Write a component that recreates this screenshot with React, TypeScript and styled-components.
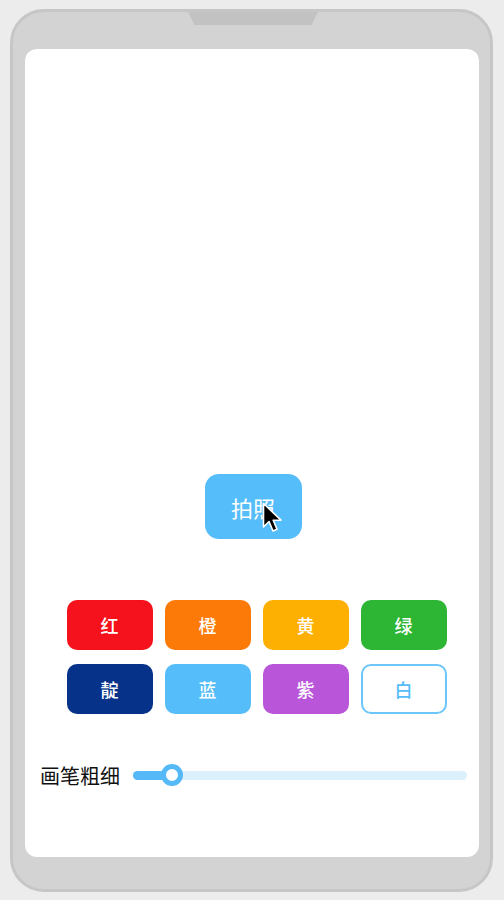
import styled, { createGlobalStyle } from 'styled-components';

const GlobalStyle = createGlobalStyle`
  html, body {
    margin: 0;
    padding: 0;
    background: #ececec;
    font-family: "Noto Sans CJK SC", "Noto Sans", sans-serif;
  }
`;

const colors: { label: string; bg: string; outline?: boolean }[] = [
  { label: '红', bg: '#f5121c' },
  { label: '橙', bg: '#fb7a08' },
  { label: '黄', bg: '#fdaf02' },
  { label: '绿', bg: '#2db534' },
  { label: '靛', bg: '#063289' },
  { label: '蓝', bg: '#55bdf9' },
  { label: '紫', bg: '#b855d9' },
  { label: '白', bg: '#ffffff', outline: true },
];

const App = (): JSX.Element => {
  const width = 11.7;
  return (
    <Page>
      <GlobalStyle />
      <Phone>
        <Notch />
        <Screen>
          <Spacer />
          <ShootButton>
            拍照
            <Cursor width="22" height="32" viewBox="0 0 22 32">
              <path
                d="M1.5 1.5 L1.5 25 L7 19.5 L11 29 L15 27.3 L11.2 18.2 L19 18.2 Z"
                fill="#000"
                stroke="#fff"
                strokeWidth="1.6"
                strokeLinejoin="round"
              />
            </Cursor>
          </ShootButton>
          <ColorGrid>
            {colors.map((c) => (
              <ColorButton key={c.label} $bg={c.bg} $outline={c.outline}>
                {c.label}
              </ColorButton>
            ))}
          </ColorGrid>
          <SliderRow>
            <SliderLabel>画笔粗细</SliderLabel>
            <Track>
              <Fill style={{ width: `${width}%` }} />
              <Thumb style={{ left: `${width}%` }} />
            </Track>
          </SliderRow>
        </Screen>
      </Phone>
    </Page>
  );
};

export default App;

const Page = styled.div`
  width: 504px;
  height: 900px;
  padding: 9px 11px 8px 10px;
  box-sizing: border-box;
`;

const Phone = styled.div`
  position: relative;
  height: 100%;
  box-sizing: border-box;
  background: #d3d3d3;
  border: 3px solid #c6c6c6;
  border-radius: 34px;
  padding: 37px 11px 32px 12px;
  display: flex;
`;

const Notch = styled.div`
  position: absolute;
  top: 0;
  left: 175px;
  width: 130px;
  height: 13px;
  background: #c2c2c2;
  clip-path: polygon(0 0, 100% 0, 95% 100%, 5% 100%);
`;

const Screen = styled.div`
  flex: 1;
  background: #ffffff;
  border-radius: 12px;
  display: flex;
  flex-direction: column;
  align-items: center;
  padding: 0 12px 70px 15px;
`;

const Spacer = styled.div`
  flex: 1;
`;

const ShootButton = styled.div`
  position: relative;
  width: 97px;
  height: 65px;
  border-radius: 14px;
  background: #55bdf9;
  color: #ffffff;
  font-size: 22px;
  display: flex;
  align-items: center;
  justify-content: center;
  margin-left: -1px;
`;

const Cursor = styled.svg`
  position: absolute;
  left: 57px;
  top: 28px;
`;

const ColorGrid = styled.div`
  margin-top: 61px;
  display: grid;
  grid-template-columns: repeat(4, 86px);
  column-gap: 12px;
  row-gap: 14px;
  margin-left: 6px;
`;

const ColorButton = styled.div<{ $bg: string; $outline?: boolean }>`
  height: 50px;
  box-sizing: border-box;
  border-radius: 10px;
  background: ${(p) => p.$bg};
  border: ${(p) => (p.$outline ? '2px solid #6cc6f9' : 'none')};
  color: ${(p) => (p.$outline ? '#55bdf9' : '#ffffff')};
  font-size: 18px;
  font-weight: 500;
  display: flex;
  align-items: center;
  justify-content: center;
`;

const SliderRow = styled.div`
  margin-top: 49px;
  align-self: stretch;
  height: 24px;
  display: flex;
  align-items: center;
  gap: 13px;
`;

const SliderLabel = styled.div`
  font-size: 20px;
  color: #111;
  white-space: nowrap;
`;

const Track = styled.div`
  position: relative;
  flex: 1;
  height: 9px;
  border-radius: 5px;
  background: #dcf0fc;
`;

const Fill = styled.div`
  height: 100%;
  border-radius: 5px;
  background: #55b9f8;
`;

const Thumb = styled.div`
  position: absolute;
  top: 50%;
  width: 22px;
  height: 22px;
  box-sizing: border-box;
  border: 5px solid #55b9f8;
  border-radius: 50%;
  background: #fff;
  transform: translate(-50%, -50%);
`;
